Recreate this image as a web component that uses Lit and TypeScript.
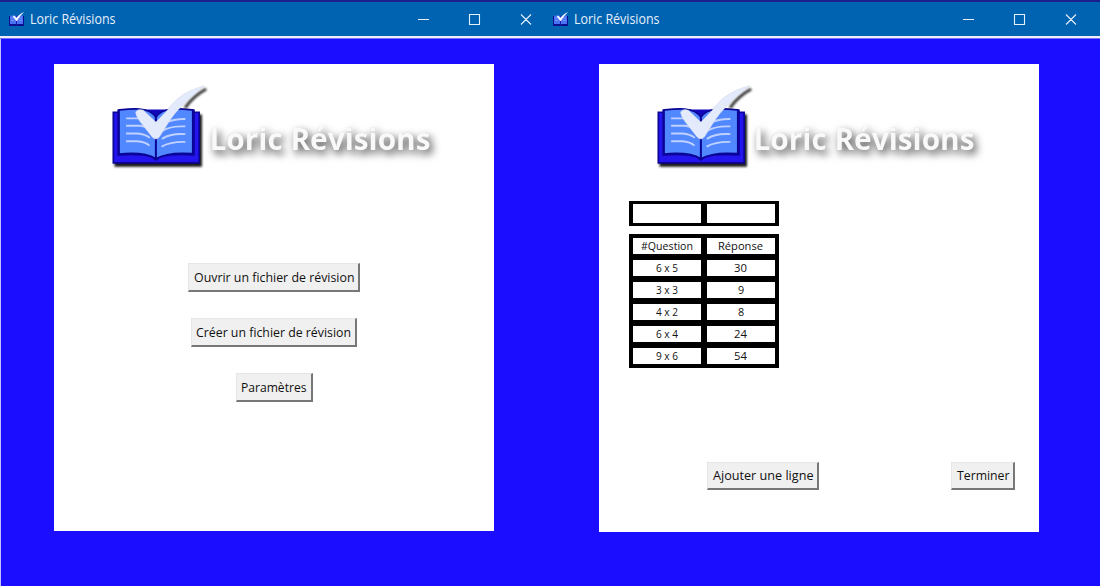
import { LitElement, html, css } from "lit";
import { customElement, property } from "lit/decorators.js";

@customElement("book-mark")
class BookMark extends LitElement {
  static styles = css`
    :host { display: block; }
    svg { display: block; width: 100%; height: 100%; overflow: visible; }
    .shade { filter: drop-shadow(6px 9px 3.5px rgba(0, 0, 0, 0.9)); }
    .blur { filter: blur(3px); }
  `;
  render() {
    return html`<svg viewBox="36 34 282 242" preserveAspectRatio="none">
      <g class="shade">
        <path fill="#2414ee" stroke="#0b0596" stroke-width="5" d="M40 115H296V265H40Z" />
      </g>
      <path fill="#1308bd" stroke="#0b0596" stroke-width="4" d="M54 107V242Q120 237 154 247L167 257L181 247Q220 237 281 242V107" />
      <path fill="#5187ff" stroke="#0b0596" stroke-width="5" d="M57 108C92 104 146 97 167 130C188 97 242 104 277 108V238Q203 232 167 253Q133 232 57 239Z" />
      <path stroke="#0b0596" stroke-width="6" d="M167 130V252" />
      <path fill="none" stroke="#bfd1ff" stroke-width="5.5"
        d="M78 133H120M78 155H120Q135 156 147 165M78 178H112Q135 180 149 191M78 201H112Q135 203 148 214M255 135Q225 134 205 143M255 157Q210 155 187 170M255 180Q210 177 185 194M255 203Q210 202 184 217" />
      <path class="blur" fill="none" stroke="#111" stroke-opacity=".85" stroke-width="9" d="M317 46Q277 68 254 102" />
      <path fill="#e3eafc" stroke="#c6cee2" stroke-width="1.2"
        d="M312 36C251 52 222 79 200 110L167 144L130 109Q113 102 106 115Q108 130 125 150L155 188Q167 201 178 188L203 148C228 108 263 76 312 36Z" />
    </svg>`;
  }
}

@customElement("title-icon")
class TitleIcon extends LitElement {
  static styles = css`
    :host { display: block; width: 16px; height: 14px; margin-right: 5px; }
    svg { display: block; overflow: visible; }
  `;
  render() {
    return html`<svg width="16" height="14" viewBox="0 0 16 14">
      <path fill="#0c0f8f" d="M0 4H15V14H0Z" />
      <path fill="#4a72f5" d="M1 3.5H6.5L7.5 5L9 3.5H14V12H1Z" />
      <path stroke="#7f9cff" stroke-width="0.8" d="M2 6H5M2 8.5H5M10 6H13M10 8.5H13" />
      <path stroke="#1a22b0" stroke-width="1" d="M7.5 8V13" />
      <path fill="#f4f8ff" d="M15 0C11 1.5 9.5 3.5 7.6 6L5.2 3.8Q3.6 3.4 4 4.8L7 8.8Q7.7 9.4 8.3 8.6C10 5.5 11.5 3.5 15 0Z" />
    </svg>`;
  }
}

@customElement("fit-text")
class FitText extends LitElement {
  @property() text = "";
  @property({ type: Number }) width = 50;
  @property({ type: Number }) size = 13.5;
  static styles = css`
    :host { display: block; height: 20px; }
    svg { display: block; height: 20px; overflow: visible; }
    text { font-family: "Open Sans", "Noto Sans", sans-serif; fill: currentColor; }
  `;
  render() {
    return html`<svg width=${this.width} height="20">
      <text x="0" y="15" font-size=${this.size} textLength=${this.width} lengthAdjust="spacingAndGlyphs">${this.text}</text>
    </svg>`;
  }
}

@customElement("app-logo")
class AppLogo extends LitElement {
  static styles = css`
    :host { display: flex; height: 81px; padding-left: 58px; }
    book-mark { width: 94.5px; height: 81.5px; flex: none; }
    .name { display: block; width: 234px; height: 92px; overflow: visible; margin-left: -2px; }
    text {
      font: 700 31px "Open Sans", sans-serif;
      fill: #f9f9f9;
      filter: drop-shadow(3px 4px 4px rgba(0, 0, 0, 0.66)) drop-shadow(0 0 0.5px rgba(0, 0, 0, 0.2));
    }
  `;
  render() {
    return html`<book-mark></book-mark>
      <svg class="name" viewBox="0 0 234 92">
        <text x="4.5" y="65.2" textLength="221" lengthAdjust="spacingAndGlyphs">Loric Révisions</text>
      </svg>`;
  }
}

@customElement("tk-button")
class TkButton extends LitElement {
  @property() text = "";
  @property({ type: Number }) width = 100;
  static styles = css`
    :host { display: block; }
    button {
      display: flex; align-items: flex-start; box-sizing: border-box; height: 28.5px; margin: 0;
      padding: 2.5px 4px 0 4.5px; background: #f0f0f0; color: #111;
      border: 1px solid #e6e6e6; border-right: 2px solid #777; border-bottom: 2px solid #777;
    }
  `;
  render() {
    return html`<button><fit-text text=${this.text} width=${this.width}></fit-text></button>`;
  }
}

@customElement("app-window")
class AppWindow extends LitElement {
  static styles = css`
    :host { display: flex; flex-direction: column; height: 586px; background: #1b0dff; }
    .bar {
      display: flex; align-items: center; flex: none; box-sizing: border-box; height: 36px;
      padding: 0 var(--bar-end, 0) 1px var(--bar-start, 9px); background: #0063b1; border-top: 2px solid #1a1f8c; color: #e6effa;
    }
    .line { height: 2px; flex: none; background: #eeeef8; border-bottom: 1px solid #7770ff; }
    .controls { display: block; margin-left: auto; }
    .body { flex: 1; display: flex; }
  `;
  render() {
    return html`<div class="bar">
        <title-icon></title-icon>
        <fit-text text="Loric Révisions" width="85.5" size="13.8"></fit-text>
        <svg class="controls" width="130" height="33" fill="none" stroke="#e6effa" stroke-width="1.1">
          <path d="M0 17.5H11M51.5 12.5h10v10h-10ZM103 12.5l10 10m0 -10l-10 10" />
        </svg>
      </div>
      <div class="line"></div>
      <div class="body"><slot></slot></div>`;
  }
}

@customElement("app-root")
class AppRoot extends LitElement {
  static styles = css`
    :host { display: block; width: 1100px; height: 586px; overflow: hidden; background: #1b0dff; }
    .desktop { display: grid; grid-template-columns: 548px 552px; height: 586px; }
    .second { --bar-start: 5px; --bar-end: 7px; }
    .edge { width: 1px; background: #c4c0ff; }
    .panel { box-sizing: border-box; width: 440px; height: 467px; background: #fff; padding-top: 21px; margin: 25px 0 0 53px; }
    .second .panel { margin: 25px 0 0 50.5px; width: 440.5px; height: 467.5px; }
    .menu { display: flex; flex-direction: column; align-items: center; gap: 26.5px; padding-top: 97.2px; }
    .table { display: grid; grid-template-columns: 68.5px 68.5px; box-sizing: border-box; width: 149.5px; gap: 5.5px; padding: 3.5px; background: #000; }
    .entry { grid-auto-rows: 18.5px; margin: 34.5px 0 0 30.5px; }
    .data { grid-auto-rows: 16.5px; margin: 8px 0 0 30.5px; }
    .cell { display: flex; justify-content: center; align-items: center; background: #fff; color: #111; }
    .cell fit-text { margin-bottom: 2px; }
    .actions { display: flex; justify-content: space-between; padding: 94px 24px 0 108.8px; }
  `;
  rows: [string, number][][] = [
    [["#Question", 52], ["Réponse", 45]],
    [["6 x 5", 22], ["30", 13]],
    [["3 x 3", 22], ["9", 6.2]],
    [["4 x 2", 22], ["8", 6.2]],
    [["6 x 4", 22], ["24", 13]],
    [["9 x 6", 22], ["54", 13]],
  ];
  render() {
    return html`<div class="desktop">
      <app-window class="first">
        <div class="edge"></div>
        <div class="panel">
          <app-logo></app-logo>
          <div class="menu">
            <tk-button text="Ouvrir un fichier de révision" width="160.5"></tk-button>
            <tk-button text="Créer un fichier de révision" width="155"></tk-button>
            <tk-button text="Paramètres" width="65.5"></tk-button>
          </div>
        </div>
      </app-window>
      <app-window class="second">
        <div class="panel">
          <app-logo></app-logo>
          <div class="table entry"><div class="cell"></div><div class="cell"></div></div>
          <div class="table data">
            ${this.rows.flat().map(([t, w]) => html`<div class="cell"><fit-text text=${t} width=${w} size="10.8"></fit-text></div>`)}
          </div>
          <div class="actions">
            <tk-button text="Ajouter une ligne" width="100.5"></tk-button>
            <tk-button text="Terminer" width="52.5"></tk-button>
          </div>
        </div>
      </app-window>
    </div>`;
  }
}
